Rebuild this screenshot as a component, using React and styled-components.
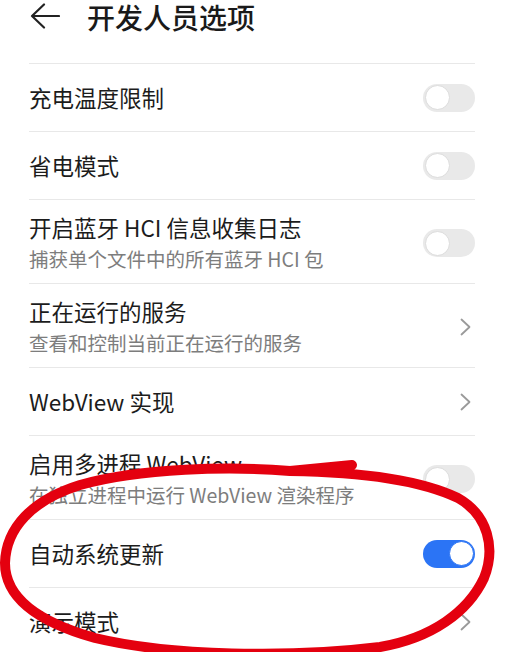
import React from "react";
import styled, { createGlobalStyle } from "styled-components";

const GlobalStyle = createGlobalStyle`
  html, body {
    margin: 0;
    padding: 0;
    background: #ffffff;
  }
  body {
    font-family: "Noto Sans CJK SC", "Noto Sans", sans-serif;
    color: #1c1c1c;
    overflow: hidden;
  }
`;

const Page = styled.div`
  position: relative;
  width: 507px;
  height: 652px;
  overflow: hidden;
  padding: 0 32px 0 29px;
  box-sizing: border-box;
`;

const Header = styled.div`
  display: flex;
  align-items: center;
  gap: 27px;
  height: 34px;
  margin-bottom: 29px;
  padding-left: 1px;
`;

const Title = styled.h1`
  margin: 0;
  font-size: 28px;
  font-weight: 500;
  line-height: 34px;
  color: #1a1a1a;
`;

const List = styled.div`
  border-top: 1px solid #e8e8e8;
`;

const Row = styled.div`
  display: flex;
  align-items: center;
  justify-content: space-between;
  height: ${({ $tall }) => ($tall ? 80 : 67)}px;
  border-bottom: 1px solid #e8e8e8;
  padding-top: ${({ $tall }) => ($tall ? 3 : 0)}px;
  box-sizing: content-box;
`;

const Texts = styled.div`
  display: flex;
  flex-direction: column;
`;

const Label = styled.span`
  font-size: 22.5px;
  line-height: 31px;
  color: #1c1c1c;
`;

const Sub = styled.span`
  font-size: 19.5px;
  line-height: 31px;
  color: #7d7d7d;
`;

const Track = styled.div`
  position: relative;
  width: 52px;
  height: 28px;
  border-radius: 14px;
  background: ${({ $on }) => ($on ? "#2b74f5" : "#e9e9e9")};
  flex-shrink: 0;
`;

const Thumb = styled.div`
  position: absolute;
  top: 1.5px;
  left: ${({ $on }) => ($on ? 25.5 : 1.5)}px;
  width: 25px;
  height: 25px;
  border-radius: 50%;
  background: #ffffff;
  box-sizing: border-box;
  border: 1px solid ${({ $on }) => ($on ? "#2b74f5" : "#dcdcdc")};
`;

const Chevron = styled.svg`
  width: 11px;
  height: 18px;
  margin-right: 4px;
  flex-shrink: 0;
`;

const Annotation = styled.svg`
  position: absolute;
  left: 0;
  top: 0;
  width: 507px;
  height: 652px;
  pointer-events: none;
`;

const BackArrow = () => (
  <svg width="30" height="26" viewBox="0 0 30 26" style={{ marginTop: -2 }}>
    <path
      d="M29 13 H2 M14 1.5 L2 13 L14 24.5"
      fill="none"
      stroke="#222"
      strokeWidth="2.2"
      strokeLinecap="round"
      strokeLinejoin="round"
    />
  </svg>
);

const Switch = ({ on }) => (
  <Track $on={on}>
    <Thumb $on={on} />
  </Track>
);

const Arrow = () => (
  <Chevron viewBox="0 0 11 18">
    <path
      d="M1.5 1.5 L9.5 9 L1.5 16.5"
      fill="none"
      stroke="#9a9a9a"
      strokeWidth="1.8"
      strokeLinecap="round"
      strokeLinejoin="round"
    />
  </Chevron>
);

const items = [
  { label: "充电温度限制", control: "off" },
  { label: "省电模式", control: "off" },
  { label: "开启蓝牙 HCI 信息收集日志", sub: "捕获单个文件中的所有蓝牙 HCI 包", control: "off" },
  { label: "正在运行的服务", sub: "查看和控制当前正在运行的服务", control: "arrow" },
  { label: "WebView 实现", control: "arrow" },
  { label: "启用多进程 WebView", sub: "在独立进程中运行 WebView 渲染程序", control: "off" },
  { label: "自动系统更新", control: "on" },
  { label: "演示模式", control: "arrow" },
];

export default function App() {
  return (
    <Page>
      <GlobalStyle />
      <Header>
        <BackArrow />
        <Title>开发人员选项</Title>
      </Header>
      <List>
        {items.map((it) => (
          <Row key={it.label} $tall={!!it.sub}>
            <Texts>
              <Label>{it.label}</Label>
              {it.sub && <Sub>{it.sub}</Sub>}
            </Texts>
            {it.control === "arrow" ? <Arrow /> : <Switch on={it.control === "on"} />}
          </Row>
        ))}
      </List>
      <Annotation viewBox="0 0 507 652">
        <path
          d="M352 465 L290 471 C230 466 140 468 80 485 C32 500 6 528 5 563 C5 598 38 622 95 638 C170 656 290 658 380 647 C432 638 468 612 484 578 C496 548 488 515 458 498 C420 480 360 472 290 471"
          fill="none"
          stroke="#e4000f"
          strokeWidth="10"
          strokeLinecap="round"
          strokeLinejoin="round"
        />
      </Annotation>
    </Page>
  );
}
